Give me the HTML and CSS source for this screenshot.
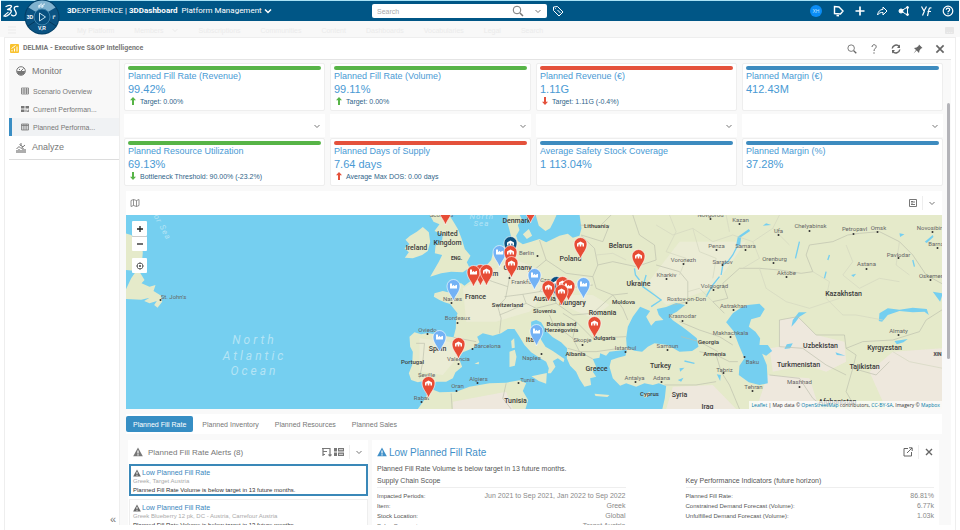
FILE: index.html
```html
<!DOCTYPE html>
<html lang="en">

<head>
    <meta charset="UTF-8">
    <meta name="viewport" content="width=device-width, initial-scale=1.0">
    <title>DELMIA - Executive S&amp;OP Intelligence</title>
    <link rel="stylesheet" href="styles.css">
</head>

<body>
    <!-- shared icons -->
    <svg class="sprite" width="0" height="0" aria-hidden="true">
        <symbol id="chevron" viewBox="0 0 8 8"><path d="M1.500 3 4 5.500 6.500 3" fill="none" stroke="currentColor"/></symbol>
        <symbol id="glass" viewBox="0 0 12 12"><circle cx="5" cy="5" r="3.800" fill="none" stroke="currentColor"/><path d="M8 8l3 3" stroke="currentColor" stroke-width="1.500"/></symbol>
        <symbol id="warning" viewBox="0 0 10 10"><path d="M5 .5 9.800 9.300H.2z" fill="currentColor"/><path d="M5 3.500v3M5 7.300v1.200" stroke="#fff" stroke-width="1.200"/></symbol>
        <symbol id="arrow-up" viewBox="0 0 6 8"><path d="M3 0 6 3.200H4V8H2V3.200H0z" fill="currentColor"/></symbol>
        <symbol id="arrow-down" viewBox="0 0 6 8"><path d="M3 8 6 4.800H4V0H2v4.800H0z" fill="currentColor"/></symbol>
        <symbol id="close" viewBox="0 0 10 10"><path d="M2 2l6 6M8 2 2 8" stroke="currentColor" stroke-width="1.400"/></symbol>
    </svg>

    <header class="topbar">
        <div class="brand">
            <svg class="ds-logo" viewBox="0 0 16 16" aria-label="3DS"><g fill="none" stroke="#fff" stroke-width="1.300" stroke-linecap="round"><path d="M3 3.500c3-1.500 6-1.500 5.500 0S6 6 4.500 6.500"/><path d="M5 6.500C9.500 6.500 9 9 6 11.500c-2 1.700-4 2-5 1.500 1.500-1.500 3-3 4-3.500"/><path d="M15 3.500c-3-.5-4.500 1-3.500 3s2.500 3.200 1.500 5-3.500 1.500-4.500.5"/></g></svg>
            <span class="brand-name"><b>3D</b>EXPERIENCE | <b>3DDashboard</b></span>
            <button class="brand-menu">Platform Management <svg class="i8" viewBox="0 0 8 8"><path d="M1 2.500 4 5.500l3-3" fill="none" stroke="currentColor" stroke-width="1.500"/></svg></button>
        </div>
        <div class="search">
            <input type="text" placeholder="Search" aria-label="Search">
            <button aria-label="Run search"><svg class="i12"><use href="#glass"/></svg></button>
            <button aria-label="Search options"><svg class="i8"><use href="#chevron"/></svg></button>
        </div>
        <div class="tools">
            <button class="tag" aria-label="Tags"><svg class="i12" viewBox="0 0 12 12" fill="none" stroke="currentColor"><path d="M1.500 2v3.500l5.500 5.500 4-4L5.500 1.500z"/><path d="M3.300 3.300l.8.8M5.500 5l3 3"/></svg></button>
            <button class="avatar">XH</button>
            <button aria-label="Notifications"><svg class="i12" viewBox="0 0 12 12" fill="none" stroke="currentColor" stroke-width="1.400"><path d="M2.500 1.500v7l6 .5 2.500-3-4-4z"/><path d="M4.500 10.500l2.500.3"/></svg></button>
            <button aria-label="Add"><svg class="i12" viewBox="0 0 12 12" stroke="currentColor" stroke-width="1.700"><path d="M6 1.500v9M1.500 6h9"/></svg></button>
            <button aria-label="Share"><svg class="i12" viewBox="0 0 12 12" fill="none" stroke="currentColor"><path d="M1.500 10C2 6.500 4 4.500 7 4.300V2l4 4-4 4V7.500C4.500 7.300 3 8 1.500 10z"/></svg></button>
            <button aria-label="Network"><svg class="i12" viewBox="0 0 12 12" fill="currentColor" stroke="currentColor"><path d="M9.500 2 3 6l6.500 4.200V2" fill="none"/><circle cx="9.500" cy="2.500" r="1"/><circle cx="3" cy="6" r="2"/><circle cx="9.500" cy="9.500" r="1"/></svg></button>
            <button aria-label="Apps"><svg class="i12" viewBox="0 0 12 12" fill="none" stroke="currentColor" stroke-width="1.200"><path d="M1.500 1.500 4 6 6.500 1.500M4.500 6 2.500 10.500M7.500 11 9 4.500c.2-1.500 1-2 2.500-1.500M7.500 6.500H11"/></svg></button>
            <button aria-label="Help"><svg class="i12" viewBox="0 0 12 12" fill="none" stroke="currentColor" stroke-width="1.200"><circle cx="6" cy="6" r="4.800"/><path d="M4.300 4.800c0-2.300 3.400-2.300 3.400 0C7.700 6 6 6 6 7.300M6 8.300v1"/></svg></button>
        </div>
        <button class="compass" aria-label="Compass">
            <svg viewBox="0 0 36 36">
                <circle cx="18" cy="18" r="17.500" fill="#023f66"/>
                <circle cx="18" cy="18" r="16.500" fill="#0b5382"/>
                <path d="M4.500 8.500A16.500 16.500 0 0 1 31.500 8.500L24 13a8 8 0 0 0-12 0z" fill="#7fb2cf"/>
                <path d="M4 27l7-4.500M32 27l-7-4.500" stroke="#03395c"/>
                <circle cx="18" cy="18" r="8" fill="#075080" stroke="#3d83ac"/>
                <path d="M15.500 14v8l6-4z" fill="none" stroke="#c5e1ef"/>
                <path d="M15 9c0-3 1-4 3-4M18 9c0-3 1-4 3-4M14 7h6" fill="none" stroke="#e6f3fa"/>
                <text x="6" y="20">3D</text><text x="30" y="20">i²</text><text x="18" y="31">V,R</text>
            </svg>
        </button>
    </header>

    <nav class="subnav">
        <button class="burger" aria-label="Menu"><svg viewBox="0 0 8 8" stroke="currentColor"><path d="M0 1h8M0 4h8M0 7h8"/></svg></button>
        <a href="#">My Platform</a>
        <a href="#">Members <svg class="i8"><use href="#chevron"/></svg></a>
        <a href="#">Subscriptions</a>
        <a href="#">Communities</a>
        <a href="#">Content</a>
        <a href="#">Dashboards</a>
        <a href="#">Vocabularies</a>
        <a href="#">Legal</a>
        <a href="#">Search</a>
        <button class="comment" aria-label="Comments">…</button>
    </nav>

    <div class="widget">
        <div class="widget-head">
            <svg class="app-icon" viewBox="0 0 9 9"><rect width="9" height="9" rx="1" fill="#f9c22e"/><path d="M2 7.500V6M4.500 7.500V4.500M7 7.500V2.500M1.500 4.500l4-3" stroke="#fff"/></svg>
            <h1>DELMIA - Executive S&amp;OP Intelligence</h1>
            <button aria-label="Find"><svg class="i12" viewBox="0 0 14 14"><use href="#glass" width="12" height="12" x="1" y="1"/></svg></button>
            <button aria-label="Help"><svg class="i12" viewBox="0 0 12 12" fill="none" stroke="currentColor"><path d="M4 4c0-3 4.200-3 4.200-.3C8.200 5.500 6 5.500 6 8M6 9.300v1.400"/></svg></button>
            <button aria-label="Refresh"><svg class="i12" viewBox="0 0 12 12" fill="none" stroke="currentColor" stroke-width="1.500"><path d="M2.200 5.500a4 4 0 0 1 7-2M9.800 6.500a4 4 0 0 1-7 2"/><path d="M10 1.500V5H7zM2 10.500V7h3z" fill="currentColor" stroke="none"/></svg></button>
            <button aria-label="Pin"><svg class="i12" viewBox="0 0 12 12"><path d="M7 1.500 10.500 5 9 5.500 7.500 7.500 7 10 4.600 7.600 1.500 10.500 4 7 2 5l2.500-.5L6.500 3z" fill="currentColor"/></svg></button>
            <button aria-label="Close"><svg class="i12"><use href="#close"/></svg></button>
        </div>

        <div class="content">
            <aside class="sidebar">
                <div class="group">
                    <h2><svg class="i10" viewBox="0 0 10 10"><circle cx="5" cy="5" r="4.300" fill="none" stroke="currentColor"/><path d="M1 5h8a4 4 0 0 1-8 0z" fill="currentColor"/><path d="M5 5 7.500 2.500M3 3l1 1" stroke="currentColor"/></svg>Monitor</h2>
                    <a href="#"><svg class="i8" viewBox="0 0 8 8"><path d="M.5 1h7v6h-7zM.5 3h7M.5 5h7M3 1v6M5.500 1v6" fill="none" stroke="currentColor" stroke-width=".8"/></svg>Scenario Overview</a>
                    <a href="#"><svg class="i8" viewBox="0 0 8 8" fill="currentColor"><path d="M0 1h3.500v2.500H0zM4.500 1H8v2.500H4.500zM0 4.500h3.500V7H0zM4.500 4.500h1V7h-1zM6 5.500h.8V7H6zM7.200 4.500H8V7h-.8z"/></svg>Current Performan...</a>
                    <a href="#" class="active"><svg class="i8" viewBox="0 0 8 8"><path d="M.5 1h7v6h-7zM2.200 1v6M4 1v6M5.800 1v6M.5 2.500h7" fill="none" stroke="currentColor" stroke-width=".8"/></svg>Planned Performa...</a>
                </div>
                <h2 class="analyze"><svg class="i10" viewBox="0 0 10 10"><path d="M1 10V7M3 10V6M5 10V7M7 10V5M9 10V6" stroke="currentColor" stroke-width="1.200"/><path d="M.5 6 3 3.500l2 2L9 2M5 0v3M3.500 1.500 7 4" fill="none" stroke="currentColor"/></svg>Analyze</h2>
                <button class="collapse" aria-label="Collapse">«</button>
            </aside>

            <main class="main">
                <section class="kpis">
                    <article class="kpi green">
                        <h3>Planned Fill Rate (Revenue)</h3>
                        <p class="value">99.42%</p>
                        <p class="note"><svg class="good"><use href="#arrow-up"/></svg>Target: 0.00%</p>
                    </article>
                    <article class="kpi green">
                        <h3>Planned Fill Rate (Volume)</h3>
                        <p class="value">99.11%</p>
                        <p class="note"><svg class="good"><use href="#arrow-up"/></svg>Target: 0.00%</p>
                    </article>
                    <article class="kpi red">
                        <h3>Planned Revenue (€)</h3>
                        <p class="value">1.11G</p>
                        <p class="note"><svg class="bad"><use href="#arrow-down"/></svg>Target: 1.11G (-0.4%)</p>
                    </article>
                    <article class="kpi blue">
                        <h3>Planned Margin (€)</h3>
                        <p class="value">412.43M</p>
                    </article>
                </section>
                <div class="filters">
                    <div><button aria-label="Expand"><svg class="i8"><use href="#chevron"/></svg></button></div>
                    <div><button aria-label="Expand"><svg class="i8"><use href="#chevron"/></svg></button></div>
                    <div><button aria-label="Expand"><svg class="i8"><use href="#chevron"/></svg></button></div>
                    <div><button aria-label="Expand"><svg class="i8"><use href="#chevron"/></svg></button></div>
                </div>
                <section class="kpis">
                    <article class="kpi green">
                        <h3>Planned Resource Utilization</h3>
                        <p class="value">69.13%</p>
                        <p class="note"><svg class="good"><use href="#arrow-down"/></svg>Bottleneck Threshold: 90.00% (-23.2%)</p>
                    </article>
                    <article class="kpi red">
                        <h3>Planned Days of Supply</h3>
                        <p class="value">7.64 days</p>
                        <p class="note"><svg class="bad"><use href="#arrow-up"/></svg>Average Max DOS: 0.00 days</p>
                    </article>
                    <article class="kpi blue">
                        <h3>Average Safety Stock Coverage</h3>
                        <p class="value">1 113.04%</p>
                    </article>
                    <article class="kpi blue">
                        <h3>Planned Margin (%)</h3>
                        <p class="value">37.28%</p>
                    </article>
                </section>

                <div class="map-head">
                    <svg class="i10" viewBox="0 0 10 10" fill="none" stroke="currentColor" stroke-width=".8"><path d="M1 2.500 3.500 1.500 6.500 2.500 9 1.500v6l-2.500 1-3-1-2.500 1zM3.500 1.500v6M6.500 2.500v6"/></svg>
                    <button class="push" aria-label="Legend"><svg class="i8" viewBox="0 0 8 8" fill="none" stroke="currentColor"><path d="M.5.500h7v7h-7zM2 2.500h2M2 4h2M2 5.500h4M5 2v2"/></svg></button>
                    <button class="split" aria-label="Map options"><svg class="i8"><use href="#chevron"/></svg></button>
                </div>

                <div class="map">
                    <svg class="map-canvas" viewBox="126 215 817 194" preserveAspectRatio="xMidYMid slice">
                        <defs>
                            <path id="drop" d="M0 0C-2-6-6.500-9-6.500-15a6.500 6.500 0 0 1 13 0C6.500-9 2-6 0 0z" stroke="#fff" stroke-width=".6"/>
                            <g id="depot"><use href="#drop"/><path d="M-3.500-12.500v-3L0-17.500l3.500 2v3H2v-2H.8v2H-.8v-2H-2v2z" fill="#fff"/></g>
                            <g id="plant"><use href="#drop"/><path d="M-3.500-12.500v-5h2v2.500l2-1.300v1.300l3-1.300v3.800z" fill="#fff"/></g>
                        </defs>
                        <rect x="126" y="215" width="817" height="194" fill="#75cff0"/>

                        <g transform="translate(380 205) scale(.3333)">
                            <g class="land">
                                <!-- Eurasia -->
                                <path d="M90 395 105 382 125 388 145 384 190 392 222 397 229 370 230 340 234 325 222 310 212 297 195 292 180 285 163 275 165 265 190 258 215 264 237 260 238 248 232 235 245 235 255 242 270 230 290 215 303 195 320 182 335 165 340 145 355 128 385 122 398 108 390 75 383 50 385 28H420L428 45 415 60 420 75 410 92 415 108 430 118 455 110 480 102 500 112 540 92 565 86 580 98 600 92 606 70 600 28H1695V615H848L856 580 860 543 838 535 820 540 795 535 770 545 740 535 722 542 700 520 690 485 695 465 715 458 738 452 742 434 715 437 690 440 680 452 662 445 660 458 640 462 650 485 640 500 650 515 632 520 635 540 615 545 600 522 590 500 572 482 562 460 563 430 545 412 520 397 500 378 485 352 470 345 455 350 455 370 468 390 482 400 498 425 520 438 555 462 552 472 535 460 520 468 528 485 514 505 505 505 508 490 500 470 480 458 455 442 435 420 420 395 405 372 385 372 365 385 340 392 310 385 293 395 300 412 280 430 250 442 238 460 248 485 228 502 220 520 200 530 170 530 150 545 132 528 115 532 95 525 88 505 98 480 100 440 92 425z"/>
                                <!-- North Africa -->
                                <path d="M115 612 138 580 150 550 180 562 230 560 270 545 330 535 380 533 420 526 440 535 430 558 446 585 438 612z"/>
                                <path d="M150 28 162 50 180 58 165 78 190 88 188 105 168 122 166 145 188 150 178 170 152 215 185 205 215 200 250 202 270 188 262 172 273 152 256 132 246 100 235 72 222 50 208 28z"/>
                                <path d="M92 92 112 80 130 66 148 82 152 110 145 138 128 150 100 160 76 158 88 142 75 130 90 118 78 104z"/>
                                <path d="M390 440 406 434 411 455 406 482 390 486zM395 408 404 400 406 428 397 430zM456 514 502 504 500 536 478 528zM645 566 690 570 684 576 648 573zM285 476 298 470 298 478zM430 88 448 72 458 92 442 102zM468 28 478 62 498 78 512 70 522 50 532 28zM790 570 812 560 808 574 796 578z"/>
                                <!-- Newfoundland -->
                                <path d="M-765 84-745 90-733 102-725 118-710 140-712 165-720 200-705 225-714 235-690 245-672 240-678 258-655 272-652 290-666 308-676 300-668 288-690 295-706 288-690 278-715 284-765 282V262L-745 220-730 198-765 195z"/>
                            </g>
                            <g class="tint">
                                <path d="M250 250 320 210 400 160 470 190 500 260 450 320 350 350 260 350zM120 400 210 410 240 450 190 510 120 500zM560 270 640 270 690 300 640 340 570 310zM900 110 1100 110 1000 250 860 300 800 240z"/>
                            </g>
                            <g class="desert">
                                <path d="M1200 345 1255 335 1310 390 1395 410 1400 470 1340 500 1280 480 1180 500 1170 430 1200 425zM1470 500 1540 440 1690 430V612H1520zM880 545 1000 540 1070 612H860zM220 590 380 560 400 612H220zM1165 510 1290 520 1320 612H1130z"/>
                            </g>
                            <g class="water">
                                <path d="M782 305 760 335 745 365 740 400 742 428 765 437 788 440 805 425 825 415 865 420 900 440 938 438 957 425 952 400 925 378 908 365 880 346 868 332 892 320 917 300 890 294 860 306 832 312 838 330 852 345 828 348 815 362 800 335 812 318z"/>
                                <path d="M1040 352 1060 325 1082 310 1105 300 1140 296 1156 312 1142 335 1115 343 1108 365 1128 380 1142 400 1140 420 1165 420 1178 438 1160 452 1148 446 1162 480 1165 535 1140 540 1108 532 1078 510 1080 482 1095 460 1078 420 1062 378z"/>
                                <path d="M1498 348 1500 325 1525 310 1560 314 1600 308 1642 312 1648 330 1635 320 1600 322 1560 318 1525 330 1508 350zM1236 365 1240 345 1258 322 1282 322 1260 335 1248 352zM1215 432 1222 418 1240 415 1232 430zM1545 408 1585 402 1572 412 1552 418zM1070 120 1075 95 1108 72 1112 78 1085 96 1082 122zM1636 110 1660 90 1662 96 1642 114zM895 525 912 518 905 530zM900 490 915 488 902 500zM1012 508 1024 510 1022 528zM1368 442 1398 452 1372 450zM1660 260 1682 290 1690 265zM1560 85 1575 88 1562 96zM1175 60 1160 55 1150 62zM1415 210 1430 206 1422 216z"/>
                            </g>
                            <g class="rivers">
                                <path d="M1075 120 1060 150 1045 170 1030 180 1025 210M1020 215 1000 240 980 275M800 210 790 245 825 270 845 285 815 305M765 190 768 210 780 225M1260 110 1248 160M1350 150 1345 165M1340 200 1335 220M1600 165 1605 185M945 475 915 468"/>
                            </g>
                            <g class="borders">
                                <path d="M110 415 135 415 130 470 120 520M222 397 290 410M303 215 340 230 385 245 378 280 355 305 365 340 360 385M385 245 400 160 395 125M480 105 500 165 470 190 455 200 500 235 480 260 430 268 375 275M500 165 560 205 640 215 655 180 645 130 605 92M430 268 440 295 385 320 360 330M480 260 520 260 560 250 640 240M520 260 530 295 470 310 440 295M530 295 580 330 640 325 700 270 730 310 745 345M510 330 520 355 580 400 590 350 550 325M580 400 600 440 650 440 720 430M590 350 640 400 740 395M600 60 660 65 695 30M605 90 670 110 690 60M655 180 700 170 770 185 830 165 825 120 780 90 760 30M830 180 900 200 925 230 925 290 880 300M565 430 600 440 640 462M640 215 650 250 700 270 745 265"/>
                                <path d="M1290 120 1280 150 1300 200 1265 205 1200 195 1140 190 1080 190 1030 235 1045 280 1000 290 1035 325M1290 120 1360 110 1405 90 1440 85 1500 80 1560 110 1600 150 1640 210 1695 240M1200 345V425M1200 345 1255 335 1310 390 1395 390 1400 430 1450 410 1540 405 1620 380 1640 345 1695 310M1200 425 1270 430 1340 480 1400 510M1400 430 1430 450 1420 490 1490 510 1530 470M900 350 960 375 1020 395 1060 420M960 440 1010 450 1050 470 1075 470M1010 450 1025 500 1050 540 1080 612M855 540 950 540 1010 530M1170 510 1260 520 1300 580 1340 612M905 395 960 410 1015 440M1420 490 1400 560 1430 612M215 565 218 612M380 535 370 580 395 612"/>
                            </g>
                            <g class="regions">
                                <path d="M830 60 880 90 940 70 1000 110 1060 90 1120 110 1180 70 1230 120M870 30 890 80 860 140 920 160 900 210M940 70 960 140 1010 160 1000 220M1120 110 1140 160 1090 190M1040 30 1050 80M1180 70 1200 30M1000 290 960 250 925 260M1400 120 1420 170 1390 210 1440 250 1500 220 1560 230M1300 200 1350 230 1340 280 1390 330M1560 110 1550 180 1590 210M1140 190 1160 250 1220 290 1290 310 1380 280M1510 345 1430 330 1390 330M1540 440 1590 470 1690 490M650 150 700 145 740 165"/>
                            </g>
                        </g>

                        <g class="sea">
                            <text x="255" y="344">North</text>
                            <text x="255" y="360">Atlantic</text>
                            <text x="255" y="375">Ocean</text>
                        </g>
                        <g class="sea small">
                            <text transform="translate(154 216) rotate(62)">or Sea</text>
                            <text x="470" y="219">North</text><text x="474" y="226">Sea</text>
                        </g>

                        <g class="country">
                            <text x="448" y="236">United</text><text x="448" y="245">Kingdom</text>
                            <text x="417" y="250">Ireland</text><text x="457" y="260" class="tiny">ENG.</text>
                            <text x="517" y="223">Denmark</text><text x="518" y="270">Germany</text>
                            <text x="486" y="276">Belgium</text><text x="571" y="261">Poland</text>
                            <text x="621" y="248">Belarus</text><text x="639" y="286">Ukraine</text>
                            <text x="476" y="299">France</text><text x="545" y="301">Austria</text>
                            <text x="573" y="305">Hungary</text><text x="603" y="315">Romania</text>
                            <text x="533" y="342">Italy</text><text x="438" y="351">Spain</text>
                            <text x="597" y="371">Greece</text><text x="516" y="403">Tunisia</text>
                            <text x="661" y="368">Turkey</text><text x="680" y="397">Syria</text>
                            <text x="708" y="409">Iraq</text><text x="844" y="296">Kazakhstan</text>
                            <text x="821" y="348">Uzbekistan</text><text x="885" y="350">Kyrgyzstan</text>
                            <text x="799" y="367">Turkmenistan</text><text x="865" y="369">Tajikistan</text>
                            <text x="838" y="404">Afghanistan</text>
                        </g>
                        <g class="country minor">
                            <text x="597" y="228">Lithuania</text><text x="508" y="307">Switzerland</text>
                            <text x="545" y="313">Slovenia</text><text x="562" y="326">Bosnia and</text>
                            <text x="562" y="332">Herzegovina</text><text x="605" y="340">Bulgaria</text>
                            <text x="624" y="304">Moldova</text><text x="576" y="356">Albania</text>
                            <text x="413" y="364">Portugal</text><text x="650" y="396">Cyprus</text>
                            <text x="709" y="344">Georgia</text><text x="715" y="356">Armenia</text>
                            <text x="938" y="356" class="tiny">XIN</text>
                        </g>
                        <g class="city">
                            <text x="442" y="217">Scotland</text><text x="527" y="255">Berlin</text>
                            <text x="524" y="284">Frankfurt</text><text x="551" y="282">Czechia</text>
                            <text x="453" y="301">Nantes</text><text x="458" y="320">Bordeaux</text>
                            <text x="428" y="332">Oviedo</text><text x="488" y="348">Barcelona</text>
                            <text x="459" y="361">Valencia</text><text x="427" y="377">Seville</text>
                            <text x="532" y="360">Naples</text><text x="479" y="381">Algiers</text>
                            <text x="458" y="388">Oran</text><text x="528" y="382">Tunis</text>
                            <text x="422" y="400">Rabat</text><text x="583" y="342">Skopje</text>
                            <text x="626" y="350">Istanbul</text><text x="635" y="380">Antalya</text>
                            <text x="662" y="380">Adana</text><text x="174" y="299">St. John's</text>
                            <text x="711" y="217">Novgorod</text><text x="741" y="222">Kazan</text>
                            <text x="779" y="233">Ufa</text><text x="811" y="228">Chelyabinsk</text>
                            <text x="855" y="231">Petropavl</text><text x="879" y="230">Omsk</text>
                            <text x="933" y="230">Novosibirsk</text><text x="939" y="246">Barnaul</text>
                            <text x="717" y="248">Penza</text><text x="746" y="248">Samara</text>
                            <text x="684" y="262">Voronezh</text><text x="723" y="264">Saratov</text>
                            <text x="775" y="261">Orenburg</text><text x="899" y="257">Pavlodar</text>
                            <text x="867" y="266">Astana</text><text x="787" y="275">Aktobe</text>
                            <text x="667" y="277">Kharkiv</text><text x="932" y="278">Oskemen</text>
                            <text x="715" y="288">Volgograd</text><text x="687" y="301">Rostov-on-Don</text>
                            <text x="734" y="308">Astrakhan</text><text x="683" y="318">Krasnodar</text>
                            <text x="731" y="335">Makhachkala</text><text x="899" y="333">Almaty</text>
                            <text x="668" y="348">Samsun</text><text x="753" y="364">Baku</text>
                            <text x="725" y="372">Tabriz</text><text x="754" y="389">Tehran</text>
                            <text x="800" y="384">Mashhad</text>
                        </g>
                        <!-- one zero-length stroke per city -->
                        <path class="dots" d="M161 300h0M538 256h0M510 278h0M452 303h0M458 323h0M428 334h0M473 349h0M459 364h0M542 354h0M478 383h0M457 391h0M519 383h0M422 402h0M583 345h0M626 352h0M636 382h0M662 382h0M711 219h0M740 224h0M779 235h0M810 231h0M854 234h0M878 232h0M933 232h0M938 248h0M717 250h0M746 250h0M684 264h0M723 265h0M774 263h0M899 258h0M867 269h0M787 277h0M667 279h0M931 280h0M714 290h0M687 303h0M734 310h0M683 321h0M731 337h0M899 335h0M668 350h0M745 357h0M724 373h0M753 391h0M800 387h0"/>

                        <g fill="#0b4f7d"><use href="#depot" x="511" y="258"/><use href="#depot" x="557" y="298"/></g>
                        <g fill="#73b2f5">
                            <use href="#plant" x="500" y="267"/><use href="#plant" x="535" y="290"/><use href="#plant" x="584" y="299"/>
                            <use href="#plant" x="454" y="301"/><use href="#plant" x="537" y="346"/><use href="#plant" x="440" y="352"/>
                        </g>
                        <g fill="#e74c35">
                            <use href="#depot" x="446" y="225"/><use href="#depot" x="531" y="223"/><use href="#depot" x="511" y="267"/>
                            <use href="#depot" x="512" y="278"/><use href="#depot" x="481" y="286"/><use href="#plant" x="474" y="287"/>
                            <use href="#depot" x="487" y="286"/><use href="#depot" x="563" y="298"/><use href="#plant" x="569" y="301"/>
                            <use href="#depot" x="549" y="302"/><use href="#depot" x="562" y="306"/><use href="#depot" x="581" y="259"/>
                            <use href="#depot" x="639" y="271"/><use href="#depot" x="595" y="338"/><use href="#depot" x="459" y="359"/>
                            <use href="#depot" x="429" y="398"/>
                        </g>
                    </svg>
                    <div class="map-controls">
                        <div class="zoom">
                            <button aria-label="Zoom in"><svg class="i8" viewBox="0 0 8 8"><path d="M4 1v6M1 4h6" stroke="currentColor" stroke-width="1.300"/></svg></button>
                            <button aria-label="Zoom out"><svg class="i8" viewBox="0 0 8 8"><path d="M1 4h6" stroke="currentColor" stroke-width="1.300"/></svg></button>
                        </div>
                        <button aria-label="Center map"><svg class="i8" viewBox="0 0 8 8"><circle cx="4" cy="4" r="3" fill="none" stroke="currentColor" stroke-width=".6"/><path d="M4 .5v1.500M4 6v1.500M.5 4H2M6 4h1.500M3 4h2M4 3v2" stroke="currentColor" stroke-width=".8"/></svg></button>
                    </div>
                    <p class="attribution"><a href="#">Leaflet</a> | Map data © <a href="#">OpenStreetMap</a> contributors, <a href="#">CC-BY-SA</a>, Imagery © <a href="#">Mapbox</a></p>
                </div>

                <div class="tabs" role="tablist">
                    <button role="tab" class="current">Planned Fill Rate</button>
                    <button role="tab">Planned Inventory</button>
                    <button role="tab">Planned Resources</button>
                    <button role="tab">Planned Sales</button>
                </div>

                <div class="panels">
                    <section class="alerts">
                        <div class="alerts-head">
                            <svg class="i10"><use href="#warning"/></svg>
                            <h2>Planned Fill Rate Alerts (8)</h2>
                            <button aria-label="Sort"><svg class="i10" viewBox="0 0 10 10" fill="none" stroke="currentColor" stroke-width="1.200"><path d="M0 1.500h6M1 4.500h4M1 7.500h2M1 1v8M8 1v8M6.500 7.500 8 9l1.500-1.500M6 1.500h2.500"/></svg></button>
                            <button aria-label="View"><svg class="i10" viewBox="0 0 10 10" fill="currentColor"><path d="M0 1h3v3.500H0zM4 1h6v3.500H4zM0 5.500h3V9H0zM4 5.500h6V9H4z"/><path d="M5 2.700h4M5 7.300h4" stroke="#fff" stroke-width=".8"/></svg></button>
                            <button class="split" aria-label="Alert options"><svg class="i8"><use href="#chevron"/></svg></button>
                        </div>
                        <article class="alert selected">
                            <h3><svg class="i8"><use href="#warning"/></svg><a href="#">Low Planned Fill Rate</a></h3>
                            <p class="where">Greek, Target Austria</p>
                            <p>Planned Fill Rate Volume is below target in 13 future months.</p>
                        </article>
                        <article class="alert">
                            <h3><svg class="i8"><use href="#warning"/></svg><a href="#">Low Planned Fill Rate</a></h3>
                            <p class="where">Greek Blueberry 12 pk, DC - Austria, Carrefour Austria</p>
                            <p>Planned Fill Rate Volume is below target in 13 future months.</p>
                        </article>
                    </section>

                    <section class="detail">
                        <div class="detail-head">
                            <svg class="i10"><use href="#warning"/></svg>
                            <h2>Low Planned Fill Rate</h2>
                            <button aria-label="Open"><svg class="i10" viewBox="0 0 10 10" fill="none" stroke="currentColor"><path d="M5 1.500H1v7.500h7.500V5M4 6l5-5M6 .8h3.200V4"/></svg></button>
                            <button class="split" aria-label="Close"><svg class="i10"><use href="#close"/></svg></button>
                        </div>
                        <p class="summary">Planned Fill Rate Volume is below target in 13 future months.</p>
                        <div class="facts">
                            <div>
                                <h3>Supply Chain Scope</h3>
                                <dl>
                                    <dt>Impacted Periods:</dt><dd>Jun 2021 to Sep 2021, Jan 2022 to Sep 2022</dd>
                                    <dt>Item:</dt><dd>Greek</dd>
                                    <dt>Stock Location:</dt><dd>Global</dd>
                                    <dt>Sales Segment:</dt><dd>Target Austria</dd>
                                </dl>
                            </div>
                            <div>
                                <h3>Key Performance Indicators (future horizon)</h3>
                                <dl>
                                    <dt>Planned Fill Rate:</dt><dd>86.81%</dd>
                                    <dt>Constrained Demand Forecast (Volume):</dt><dd>6.77k</dd>
                                    <dt>Unfulfilled Demand Forecast (Volume):</dt><dd>1.03k</dd>
                                </dl>
                            </div>
                        </div>
                    </section>
                </div>
                <div class="scroll-thumb"></div>
            </main>
        </div>
    </div>
</body>

</html>
```
FILE: styles.css
```css
*{
    box-sizing: border-box;
    margin:0;
    padding:0;
}
body{
    height:100vh;
    overflow:hidden;
    display:flex;
    flex-direction: column;
    background:#fff;
    color:#555;
    font:7px/9px "Liberation Sans", Arial, sans-serif;
}
button{
    border:0;
    background:none;
    color:inherit;
    font:inherit;
    display:flex;
    align-items: center;
    justify-content: center;
}
a{
    color:inherit;
    text-decoration:none;
}
h1, h2, h3{
    font-weight:normal;
}
svg{
    flex:none;
    display:block;
}
.sprite{
    position:absolute;
}
.i8{
    width:8px;
    height:8px;
}
.i10{
    width:10px;
    height:10px;
}
.i12{
    width:12px;
    height:12px;
}

/* top bar */
.topbar{
    position:relative;
    flex:none;
    display:grid;
    grid-template-columns: 371fr 175px 412fr;
    align-items: center;
    height:21px;
    margin:0 1px;
    border-top:1px solid #a9e2f5;
    background:#005686;
    color:#fff;
}
.brand{
    display:flex;
    align-items: center;
    font:8px/10px Roboto, sans-serif;
}
.ds-logo{
    width:16px;
    height:16px;
    margin-left:2px;
}
.brand-name{
    margin-left:48px;
}
.brand-menu{
    gap:2px;
    margin-left:4px;
}
.search{
    display:flex;
    align-items: center;
    height:14px;
    padding:0 5px;
    border-radius:2px;
    background:#fff;
    color:#777;
}
.search input{
    flex:1;
    min-width:0;
    border:0;
    outline:none;
    background:none;
    font:inherit;
}
.search input::placeholder{
    color:#aaa;
}
.search button{
    margin-left:10px;
}
.tools{
    display:flex;
    align-items: center;
    gap:10px;
    padding:0 5px;
}
.tools .tag{
    margin-right:auto;
}
.avatar{
    width:12px;
    height:12px;
    border-radius:50%;
    background:#0a8cf5;
    font-size:5px;
    color:#bfe2ff;
}
.compass{
    position:absolute;
    left:23px;
    top:-2px;
    z-index:2;
}
.compass svg{
    width:36px;
    height:36px;
}
.compass text{
    fill:#fff;
    font-size:5px;
    font-weight:bold;
    text-anchor:middle;
}

/* tab names dimmed behind the widget */
.subnav{
    flex:none;
    display:flex;
    align-items: center;
    gap:20px;
    height:16px;
    padding:2px 6px 0 8px;
    background:#f8f8f8;
    color:#ebebeb;
}
.subnav a{
    display:flex;
    gap:7px;
}
.burger{
    margin-right:41px;
}
.burger svg{
    width:8px;
    height:8px;
}
.comment{
    width:9px;
    height:7px;
    margin-left:auto;
    border-radius:1px;
    background:#e6e6e6;
    color:#fff;
}

.widget{
    flex:1;
    min-height:0;
    display:flex;
    flex-direction: column;
    margin:0 4px;
    padding:0 4px 5px;
    border:1px solid #eee;
    border-bottom:0;
}
.widget-head{
    flex:none;
    display:flex;
    align-items: center;
    gap:10px;
    height:22px;
    padding:0 5px 0 1px;
    border-bottom:1px solid #e4e4e4;
    color:#666;
}
.widget-head h1{
    flex:1;
    margin-left:-6px;
    font:bold 7px/9px Roboto, sans-serif;
    color:#777;
}
.app-icon{
    width:9px;
    height:9px;
}
.content{
    flex:1;
    min-height:0;
    display:flex;
}

/* sidebar */
.sidebar{
    flex:none;
    width:110px;
    display:flex;
    flex-direction: column;
    color:#777;
}
.group{
    background:#f8f8f8;
}
.sidebar h2{
    display:flex;
    align-items: center;
    gap:6px;
    height:22px;
    padding-left:7px;
    font-size:9px;
}
.sidebar a{
    display:flex;
    align-items: center;
    gap:4px;
    height:18px;
    padding-left:9px;
    border-left:3px solid transparent;
}
.sidebar a.active{
    border-color:#3a8ec4;
    background:#f0f2f4;
}
.sidebar .analyze{
    height:24px;
    border-bottom:1px solid #ddd;
}
.collapse{
    margin:auto 3px 0 auto;
    font-size:11px;
    line-height:12px;
}

/* main area */
.main{
    position:relative;
    flex:1;
    min-width:0;
    overflow:hidden;
    padding:3px 8px 0 4px;
    border-left:1px solid #eee;
    background:#f9f9f9;
}
.kpis, .filters{
    display:grid;
    grid-template-columns: repeat(4,1fr);
    gap:5px;
}
.kpi{
    height:48px;
    padding:2px 3px;
    border:1px solid #eee;
    border-radius:2px;
    background:#fff;
    color:#4a9ad4;
}
.kpi::before{
    content:"";
    display:block;
    height:4px;
    border-radius:2px;
    background:#3d8bbf;
}
.kpi.green::before{
    background:#57b447;
}
.kpi.red::before{
    background:#e4513b;
}
.kpi h3{
    font-size:9px;
    line-height:12px;
}
.kpi .value{
    font-size:11px;
    line-height:14px;
}
.note{
    display:flex;
    align-items: center;
    gap:4px;
    height:10px;
    padding-left:2px;
    color:#2f6489;
}
.note svg{
    width:6px;
    height:8px;
}
.good{
    color:#57b447;
}
.bad{
    color:#e4513b;
}
.filters{
    margin:3px 0 1px;
}
.filters div{
    display:flex;
    justify-content: flex-end;
    height:23px;
    padding-right:4px;
    background:#fff;
    color:#777;
}
.map-head{
    display:flex;
    align-items: center;
    height:24px;
    margin:5px 1px 0 2px;
    padding:0 6px 0 4px;
    background:#fff;
    color:#777;
}
.push{
    margin-left:auto;
}
.split{
    height:14px;
    margin-left:5px;
    padding-left:5px;
    border-left:1px solid #eee;
}

/* map */
.map{
    position:relative;
    margin:0 1px 5px 2px;
}
.map-canvas{
    width:100%;
    height:194px;
}
.land{
    fill:#e5eaca;
}
.tint{
    fill:#eeecdc;
    opacity:.6;
}
.desert{
    fill:#f0e7e1;
    opacity:.8;
}
.water{
    fill:#75cff0;
}
.rivers, .borders, .regions{
    fill:none;
    stroke:#75cff0;
    stroke-width:4;
}
.borders{
    stroke:#bdbfae;
    stroke-width:2;
}
.regions{
    stroke:#d3d6bf;
    stroke-width:2;
}
.map-canvas text{
    text-anchor:middle;
    font-family:Roboto, sans-serif;
}
.country{
    fill:#3a3a3a;
    font-size:7px;
    font-weight:500;
}
.country.minor{
    font-size:6px;
}
.city{
    fill:#666;
    font-size:6px;
}
.country .tiny{
    font-size:5px;
    font-weight:bold;
}
.dots{
    stroke:#333;
    stroke-width:2;
    stroke-linecap:round;
}
.sea{
    fill:#b4e4f5;
    font-size:12px;
    font-style:italic;
    letter-spacing:3px;
}
.sea.small{
    font-size:8px;
    letter-spacing:1px;
}
.map-canvas .small text{
    text-anchor:start;
}
.map-controls{
    position:absolute;
    left:6px;
    top:6px;
    display:grid;
    gap:7px;
    color:#222;
}
.map-controls button{
    width:15px;
    height:15px;
    border-radius:1px;
    background:#fff;
}
.zoom button + button{
    border-top:1px solid #ccc;
}
.attribution{
    position:absolute;
    right:0;
    bottom:0;
    padding:0 2px;
    background:rgba(255,255,255,.7);
    font:5px/8px "Open Sans", sans-serif;
    color:#333;
}
.attribution a{
    color:#0078a8;
}

/* tabs */
.tabs{
    display:flex;
    align-items: center;
    gap:2px;
    height:20px;
    margin:0 1px 6px 2px;
    background:#fff;
    color:#777;
}
.tabs button{
    height:16px;
    padding:0 7px;
    border-radius:2px;
}
.tabs .current{
    background:#368ec4;
    color:#fff;
}

/* alert list and detail */
.panels{
    display:grid;
    grid-template-columns: 240fr 567fr;
    gap:4px;
    margin:0 4px;
    font-size:6px;
}
.alerts, .detail{
    background:#fff;
}
.alerts-head, .detail-head{
    display:flex;
    align-items: center;
    height:24px;
    padding:0 5px;
    color:#777;
}
.alerts-head h2{
    flex:1;
    margin-left:5px;
    font-size:8px;
}
.alerts-head button + button{
    margin-left:2px;
}
.alerts-head .split{
    margin-left:5px;
}
.alert{
    height:32px;
    margin:0 0 3px 1px;
    padding:3px 3px 0;
    border:1px solid #eee;
    line-height:9px;
    color:#333;
}
.alert.selected{
    padding:2px 2px 0;
    border:2px solid #3a88b8;
}
.alert h3{
    display:flex;
    align-items: center;
    gap:1px;
    font-size:7px;
    color:#666;
}
.alert h3 a{
    color:#3a86bd;
}
.alert .where{
    color:#aaa;
}
.detail{
    padding:0 5px;
}
.detail-head{
    padding:0;
}
.detail-head h2{
    flex:1;
    margin-left:2px;
    font-size:10px;
}
.detail-head h2, .detail-head > svg{
    color:#3f8fc8;
}
.detail-head button{
    color:#666;
}
.summary{
    margin-bottom:3px;
    font-size:7px;
}
.facts{
    display:grid;
    grid-template-columns: 1fr 1fr;
    gap:60px;
}
.facts h3{
    padding-bottom:2px;
    border-bottom:1px solid #eee;
    font-size:7px;
}
.facts dl{
    display:grid;
    grid-template-columns: auto 1fr;
    margin-top:3px;
    line-height:10px;
}
.facts dd{
    font-size:7px;
    text-align:right;
    color:#888;
}
.scroll-thumb{
    position:absolute;
    right:1px;
    top:43px;
    width:3px;
    height:256px;
    border-radius:2px;
    background:#b3b3b8;
}
```
